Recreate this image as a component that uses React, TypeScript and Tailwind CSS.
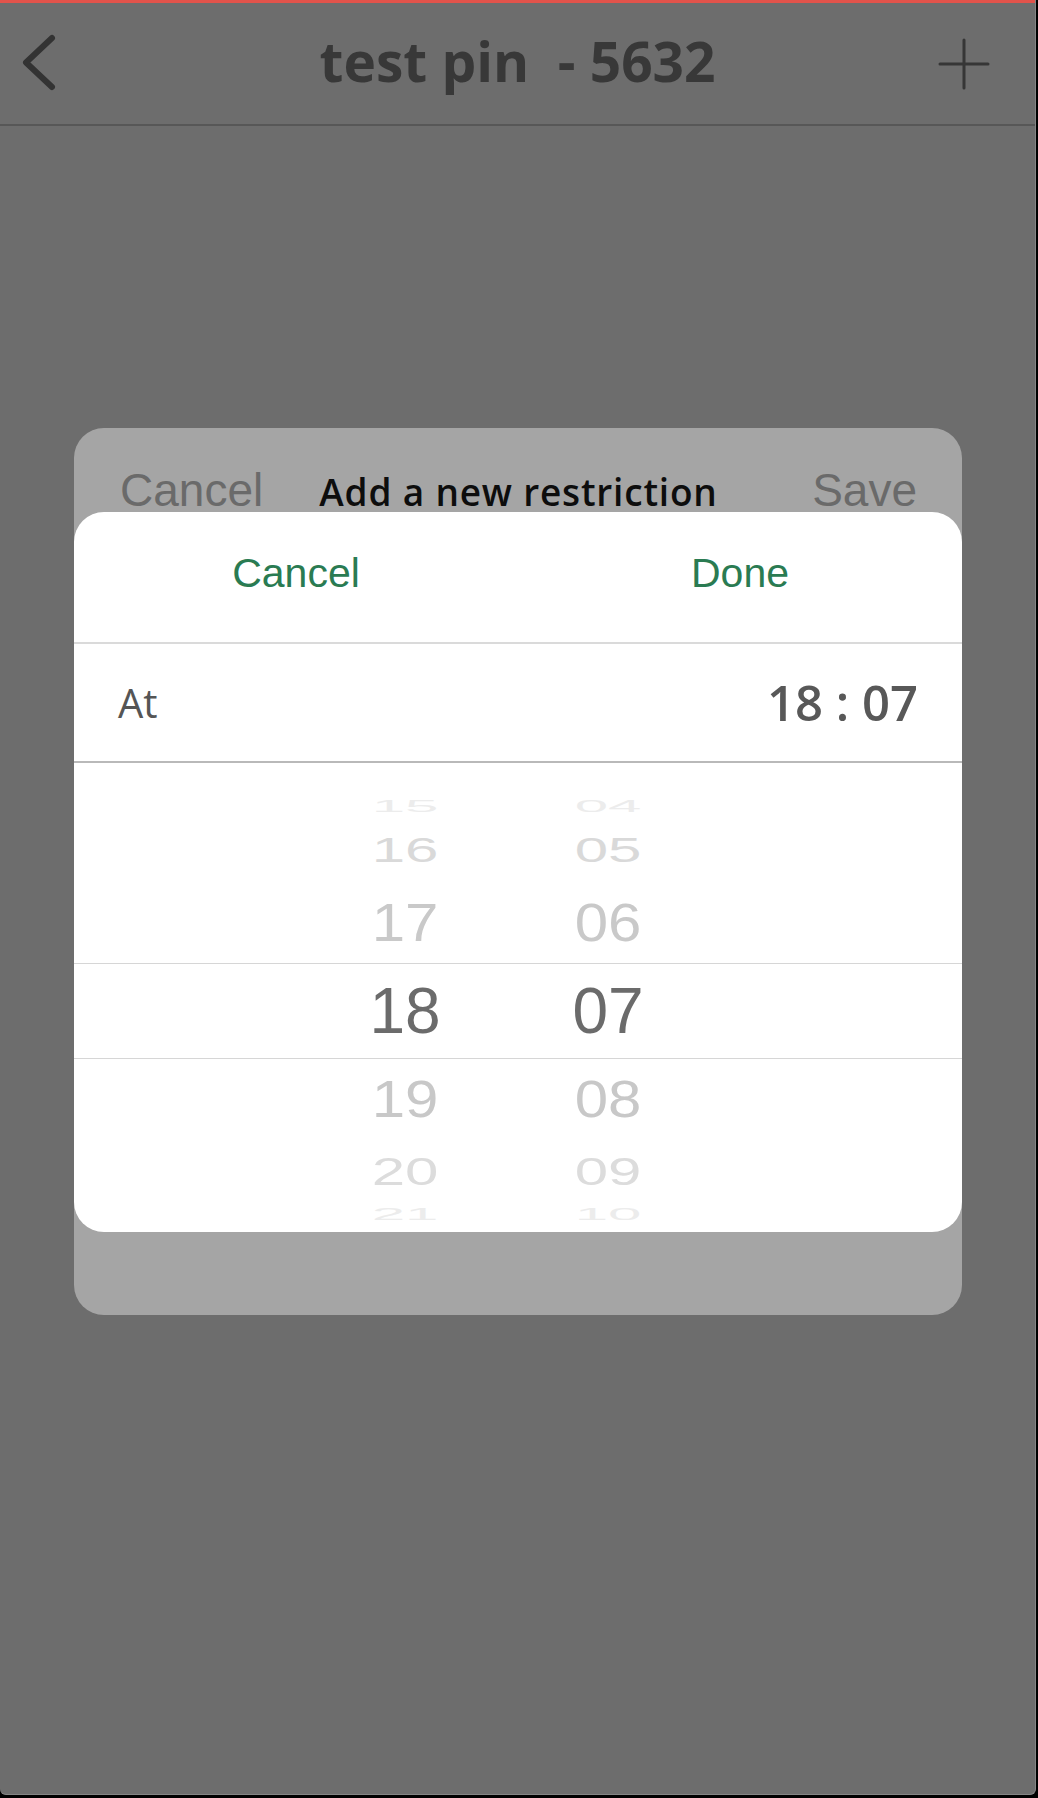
import React from 'react';

const sans = "font-['Liberation_Sans',Arial,sans-serif]";
const open = "font-['Open_Sans',sans-serif]";

type WheelRow = { h: string; m: string; rowClass: string; textClass: string };

const above: WheelRow[] = [
  { h: '15', m: '04', rowClass: 'h-[20px]', textClass: 'scale-y-[0.26] text-[#ececec]' },
  { h: '16', m: '05', rowClass: 'h-[66px]', textClass: 'scale-y-[0.6] text-[#d9d9d9]' },
  { h: '17', m: '06', rowClass: 'h-[80px]', textClass: 'scale-y-[0.88] text-[#c9c9c9]' },
];

const below: WheelRow[] = [
  { h: '19', m: '08', rowClass: 'h-[82px]', textClass: 'scale-y-[0.86] text-[#c8c8c8]' },
  { h: '20', m: '09', rowClass: 'h-[62px]', textClass: 'scale-y-[0.65] text-[#dcdcdc]' },
  { h: '21', m: '10', rowClass: 'h-[22px]', textClass: 'scale-y-[0.28] text-[#ececec]' },
];

function Row({ row }: { row: WheelRow }) {
  return (
    <div className={`flex items-center gap-[83px] pl-[271px] ${row.rowClass}`}>
      {[row.h, row.m].map((v) => (
        <div key={v} className="flex w-[120px] items-center justify-center">
          <span className={`inline-block text-[60px] leading-none ${sans} ${row.textClass}`}>{v}</span>
        </div>
      ))}
    </div>
  );
}

function TimeWheel() {
  return (
    <div className="flex h-[469px] flex-col overflow-hidden pt-[34px]">
      {above.map((r) => (
        <Row key={r.h} row={r} />
      ))}
      <div className="flex h-[96px] items-center gap-[83px] border-y border-[#d6d6d6] pl-[271px]">
        <div className="flex w-[120px] justify-center">
          <span className={`text-[64px] leading-none text-[#6b6b6b] ${sans}`}>18</span>
        </div>
        <div className="flex w-[120px] justify-center">
          <span className={`text-[64px] leading-none text-[#6b6b6b] ${sans}`}>07</span>
        </div>
      </div>
      {below.map((r) => (
        <Row key={r.h} row={r} />
      ))}
    </div>
  );
}

export default function App() {
  return (
    <div className="h-[1798px] w-[1038px] bg-black">
      <div className="h-[1795px] w-[1036px] overflow-hidden rounded-b-[6px] border-r border-b border-[#858585] bg-[#6d6d6d]">
        <div className="h-[3px] bg-[#e2534b]" />

        {/* nav bar */}
        <header className="grid h-[123px] grid-cols-[1fr_auto_1fr] items-center border-b-2 border-[#575757] px-[20px]">
          <svg width="40" height="60" viewBox="0 0 40 60" className="mt-[-2px]">
            <polyline points="32,5 6,29.5 32,54" fill="none" stroke="#333" strokeWidth="6" strokeLinecap="round" strokeLinejoin="round" />
          </svg>
          <h1 className={`mb-[6px] text-[55px] font-bold leading-none text-[#383838] whitespace-pre ${open}`}>
            {'test pin  - 5632'}
          </h1>
          <div className="flex justify-end pr-[25px]">
            <svg width="52" height="52" viewBox="0 0 52 52">
              <path d="M2 26H50M26 2V50" stroke="#363636" strokeWidth="3" strokeLinecap="round" />
            </svg>
          </div>
        </header>

        {/* restriction modal */}
        <div className="ml-[74px] mt-[302px] w-[888px] rounded-[30px] bg-[#a5a5a5]">
          <div className="grid h-[84px] grid-cols-[1fr_auto_1fr] items-end pl-[46px] pr-[45px]">
            <span className={`mb-[-1px] text-[46px] leading-none text-[#6a6a6a] ${sans}`}>Cancel</span>
            <span className={`mb-[2px] text-[37px] font-semibold leading-none tracking-[0.8px] text-[#0d0d0d] ${open}`}>
              Add a new restriction
            </span>
            <span className={`mb-[-1px] justify-self-end text-[46px] leading-none text-[#6a6a6a] ${sans}`}>Save</span>
          </div>

          {/* time picker sheet */}
          <div className="overflow-hidden rounded-[30px] bg-white">
            <div className="flex h-[132px] items-center border-b-2 border-[#dadada] pb-[8px]">
              <button className={`flex-1 text-[41px] leading-none text-[#2a7b52] ${sans}`}>Cancel</button>
              <button className={`flex-1 text-[41px] leading-none text-[#2a7b52] ${sans}`}>Done</button>
            </div>
            <div className="flex h-[119px] items-center justify-between border-b-2 border-[#b9b9b9] px-[44px]">
              <span className={`text-[40px] leading-none text-[#555] ${open}`}>At</span>
              <span className={`text-[49px] font-semibold leading-none text-[#585858] whitespace-pre ${open}`}>{'18 : 07'}</span>
            </div>
            <TimeWheel />
          </div>

          <div className="h-[83px]" />
        </div>
      </div>
    </div>
  );
}
